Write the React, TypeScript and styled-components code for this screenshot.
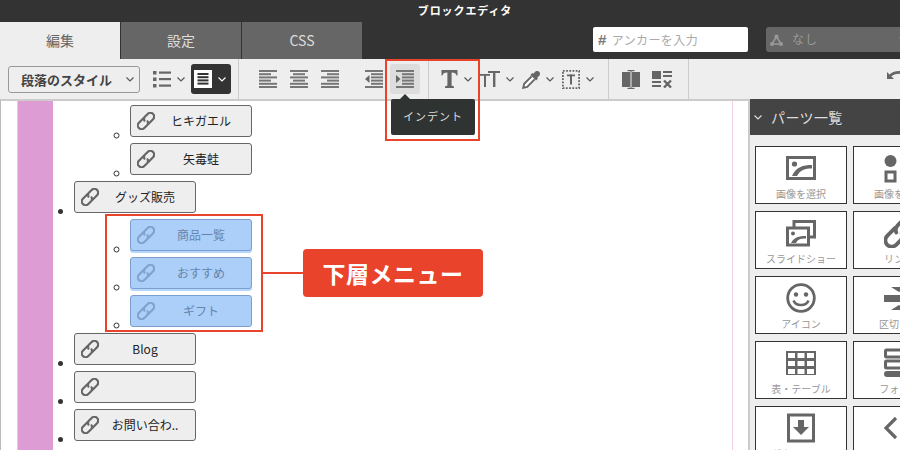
import React from 'react'
import styled, { createGlobalStyle } from 'styled-components'

const GlobalStyle = createGlobalStyle`
  html, body {
    margin: 0;
    padding: 0;
    background: #fff;
    font-family: "Noto Sans CJK JP", "Liberation Sans", sans-serif;
  }
`

const grey = '#666'

const Caret: React.FC<{ color?: string }> = ({ color = '#555' }) => (
  <svg width="8" height="5" viewBox="0 0 8 5">
    <polyline points="0.5,0.5 4,4 7.5,0.5" fill="none" stroke={color} strokeWidth="1.2" />
  </svg>
)

const Icon18: React.FC<{ w?: number, h?: number, children: React.ReactNode }> = ({ w = 18, h = 18, children }) => (
  <svg width={w} height={h} viewBox={`0 0 ${w} ${h}`}>{children}</svg>
)

// two open links along the diagonal, same drawing for the list buttons and the parts panel
const ChainIcon: React.FC<{ size: number, weight?: number }> = ({ size, weight = 2.2 }) => (
  <svg width={size} height={size} viewBox="0 0 18 18" fill="none" stroke="currentColor" strokeWidth={weight} strokeLinecap="round">
    <g transform="rotate(-45 9 9)">
      <path d="M9.5 5.2H2.8a3.8 3.8 0 0 0 0 7.6H6.5a3.8 3.8 0 0 0 3.4-2.4" />
      <path d="M8.5 12.8H15.2a3.8 3.8 0 0 0 0-7.6H11.5a3.8 3.8 0 0 0-3.4 2.4" />
    </g>
  </svg>
)

// rows are [x, width] for the text lines of the paragraph icons
const Lines: React.FC<{ rows: Array<[number, number]> }> = ({ rows }) => (
  <>
    {rows.map(([x, w], i) => (
      <rect key={i} x={x} y={i * 3.2} width={w} height="2" fill="#777" />
    ))}
  </>
)

const AlignIcon: React.FC<{ rows: Array<[number, number]> }> = ({ rows }) => (
  <Icon18><Lines rows={rows} /></Icon18>
)

const OutdentIcon = () => (
  <Icon18>
    <Lines rows={[[0, 18], [6, 12], [6, 12], [6, 12], [6, 12], [0, 18]]} />
    <polygon points="0,9 4.5,5 4.5,13" fill={grey} />
  </Icon18>
)

const IndentIcon = () => (
  <Icon18>
    <Lines rows={[[0, 18], [6, 12], [6, 12], [6, 12], [6, 12], [0, 18]]} />
    <polygon points="4.5,9 0,5 0,13" fill={grey} />
  </Icon18>
)

const ListIcon = () => (
  <Icon18>
    {[1, 7.5, 14].map((y) => (
      <g key={y}>
        <rect x="0" y={y} width="3.5" height="3.5" fill={grey} />
        <rect x="6" y={y + 0.5} width="12" height="2.2" fill={grey} />
      </g>
    ))}
  </Icon18>
)

const ParagraphIcon = () => (
  <Icon18>
    <rect width="18" height="18" fill="#fff" />
    {[3, 6.2, 9.4, 12.6].map((y) => (
      <rect key={y} x="3.5" y={y} width="11" height="2" fill="#333" />
    ))}
  </Icon18>
)

const SerifTIcon = () => (
  <Icon18 w={17} h={20}>
    <path d="M0.5 1H16.5V6.5H15.5C15 4.5 14 3.4 10.6 3.4V16.6L13 17.6V19H4V17.6L6.4 16.6V3.4C3 3.4 2 4.5 1.5 6.5H0.5Z" fill={grey} />
  </Icon18>
)

const SizeIcon = () => (
  <Icon18 w={20} h={18}>
    <rect x="0" y="4" width="10" height="1.8" fill={grey} />
    <rect x="4" y="4" width="2" height="13" fill={grey} />
    <rect x="8" y="1" width="12" height="2" fill={grey} />
    <rect x="13" y="1" width="2.4" height="16" fill={grey} />
  </Icon18>
)

const DropperIcon = () => (
  <Icon18 h={19}>
    <path d="M12.5 2.5C14 0.6 16.2 0.6 17.2 1.8C18.4 2.9 18.3 5 16.5 6.5L15.2 7.8L16 8.6L14 10.6L8.4 5L10.4 3L11.2 3.8Z" fill={grey} />
    <path d="M9.6 6.4L2.2 13.8L1.2 17.8L5.2 16.8L12.6 9.4" fill="#fff" stroke={grey} strokeWidth="1.9" />
  </Icon18>
)

const FrameTIcon = () => (
  <Icon18 h={19}>
    <rect x="0.9" y="0.9" width="16.2" height="17.2" fill="none" stroke={grey} strokeWidth="1.8" strokeDasharray="1.8 1.4" />
    <rect x="5" y="4.5" width="8" height="1.8" fill={grey} />
    <rect x="8" y="4.5" width="2" height="10" fill={grey} />
  </Icon18>
)

const ColumnsIcon = () => (
  <Icon18 h={21}>
    <rect x="0" y="3" width="8" height="15" fill={grey} />
    <rect x="10" y="3" width="8" height="15" fill={grey} />
    <rect x="5.5" y="1" width="7" height="1.2" fill={grey} />
    <rect x="5.5" y="18.8" width="7" height="1.2" fill={grey} />
    <rect x="8.5" y="1" width="1" height="19" fill={grey} />
  </Icon18>
)

const ClearIcon = () => (
  <Icon18 w={20} h={18}>
    <rect x="0" y="1" width="9" height="8" fill={grey} />
    <rect x="11" y="1" width="9" height="2" fill={grey} />
    <rect x="11" y="5" width="9" height="2" fill={grey} />
    <rect x="0" y="11" width="9" height="2" fill={grey} />
    <rect x="0" y="15" width="9" height="2" fill={grey} />
    <path d="M12 10.5L19 17.5M19 10.5L12 17.5" stroke={grey} strokeWidth="2.4" />
  </Icon18>
)

const UndoIcon = () => (
  <svg width="18" height="14" viewBox="0 0 18 14">
    <polygon points="0,3 0,10 7,10" fill={grey} />
    <path d="M3 7C6 3.5 11 2.5 18 4" fill="none" stroke={grey} strokeWidth="2.6" />
  </svg>
)

const HubIcon = () => (
  <svg width="13" height="12" viewBox="0 0 13 12">
    <path d="M6.5 2.5L2 10H11Z" fill="none" stroke="#999" strokeWidth="1.6" />
    <circle cx="6.5" cy="2.5" r="2" fill="#999" />
    <circle cx="2" cy="10" r="2" fill="#999" />
    <circle cx="11" cy="10" r="2" fill="#999" />
  </svg>
)

const PartSvg = styled.svg`
  width: 30px;
  height: 30px;
  display: block;
`

const ImagePart = () => (
  <PartSvg viewBox="0 0 30 30">
    <rect x="1.5" y="4.5" width="27" height="21" fill="none" stroke={grey} strokeWidth="3" />
    <circle cx="8.5" cy="11" r="2.6" fill={grey} />
    <path d="M6 23C10 14 17 12 26 12V15.5C19 15.5 14 17 11 23Z" fill={grey} />
  </PartSvg>
)

const ShapesPart = () => (
  <PartSvg viewBox="0 0 30 30">
    <circle cx="6.5" cy="8" r="6" fill={grey} />
    <polygon points="23,2 30,14 16,14" fill={grey} />
    <rect x="2" y="19" width="9" height="9" fill="none" stroke={grey} strokeWidth="3" />
    <path d="M16 28L23 17L30 28Z" fill={grey} />
  </PartSvg>
)

const SlidesPart = () => (
  <PartSvg viewBox="0 0 30 30">
    <path d="M8 9V3.5H28.5V19H23" fill="none" stroke={grey} strokeWidth="3" />
    <rect x="1.5" y="10" width="21" height="17" fill="none" stroke={grey} strokeWidth="3" />
    <circle cx="7" cy="15.5" r="2" fill={grey} />
    <path d="M5 25C8 19 13 18 20 18V20.5C15 20.5 12 21 10 25Z" fill={grey} />
  </PartSvg>
)

const LinkPart = () => <LinkWrap><ChainIcon size={30} weight={2.3} /></LinkWrap>

const SmilePart = () => (
  <PartSvg viewBox="0 0 30 30">
    <circle cx="15" cy="15" r="13.3" fill="none" stroke={grey} strokeWidth="2.8" />
    <circle cx="10" cy="11.5" r="2.2" fill={grey} />
    <circle cx="20" cy="11.5" r="2.2" fill={grey} />
    <path d="M7.5 17.5C9.5 23.5 20.5 23.5 22.5 17.5" fill="none" stroke={grey} strokeWidth="2.4" />
  </PartSvg>
)

const DividerPart = () => (
  <PartSvg viewBox="0 0 30 30">
    <polygon points="7,4 23,4 15,9" fill={grey} />
    <rect x="0" y="12" width="30" height="7" fill={grey} />
    <polygon points="7,27 23,27 15,22" fill={grey} />
  </PartSvg>
)

const TablePart = () => (
  <PartSvg viewBox="0 0 30 30">
    <rect x="0" y="3" width="30" height="24" fill={grey} />
    {[2, 11.5, 21].map((x) => [5, 13, 21].map((y) => (
      <rect key={`${x}-${y}`} x={x} y={y} width="7" height="5" fill="#fff" />
    )))}
  </PartSvg>
)

const FormPart = () => (
  <PartSvg viewBox="0 0 30 30">
    <rect x="1.5" y="2" width="27" height="7" rx="1" fill="none" stroke={grey} strokeWidth="3" />
    <rect x="1.5" y="13" width="27" height="7" rx="1" fill="none" stroke={grey} strokeWidth="3" />
    <rect x="0" y="23" width="30" height="6" rx="3" fill={grey} />
  </PartSvg>
)

const DownloadPart = () => (
  <PartSvg viewBox="0 0 30 30">
    <rect x="2.5" y="2" width="25" height="26" fill="none" stroke={grey} strokeWidth="3" />
    <rect x="12" y="7" width="6" height="8" fill={grey} />
    <polygon points="7,14 23,14 15,22" fill={grey} />
  </PartSvg>
)

const CodePart = () => (
  <PartSvg viewBox="0 0 30 30">
    <polyline points="12,5 2,15 12,25" fill="none" stroke={grey} strokeWidth="3.2" />
    <polyline points="18,5 28,15 18,25" fill="none" stroke={grey} strokeWidth="3.2" />
  </PartSvg>
)

const parts: Array<{ label: string, icon: React.ReactNode }> = [
  { label: '画像を選択', icon: <ImagePart /> },
  { label: '画像を挿入', icon: <ShapesPart /> },
  { label: 'スライドショー', icon: <SlidesPart /> },
  { label: 'リンク', icon: <LinkPart /> },
  { label: 'アイコン', icon: <SmilePart /> },
  { label: '区切り線', icon: <DividerPart /> },
  { label: '表・テーブル', icon: <TablePart /> },
  { label: 'フォーム', icon: <FormPart /> },
  { label: 'ダウンロード', icon: <DownloadPart /> },
  { label: 'ソースコード', icon: <CodePart /> },
]

interface MenuItem {
  label: string,
  selected?: boolean,
  trail?: boolean,
  children?: Array<MenuItem>
}

const menu: Array<MenuItem> = [
  { label: 'グッズ販売', children: [
    { label: '商品一覧', selected: true, trail: true },
    { label: 'おすすめ', selected: true, trail: true },
    { label: 'ギフト', selected: true },
  ] },
  { label: 'Blog' },
  { label: '' },
  { label: 'お問い合わ..' },
]

const LinkButton: React.FC<{ item: MenuItem }> = ({ item }) => (
  <MenuButton $selected={item.selected} $trail={item.trail}>
    <MenuRow>
      <LinkGlyph $selected={item.selected}><ChainIcon size={18} /></LinkGlyph>
      <MenuLabel>{item.label}</MenuLabel>
    </MenuRow>
  </MenuButton>
)

const App: React.FC = () => (
  <Page>
    <GlobalStyle />
    <Header>
      <Title>ブロックエディタ</Title>
      <HeaderRow>
        <Tab $active>編集</Tab>
        <Tab>設定</Tab>
        <Tab>CSS</Tab>
        <Anchor>
          <Hash>#</Hash>
          アンカーを入力
        </Anchor>
        <Dropdown>
          <HubIcon />
          <DropdownText>なし</DropdownText>
          <Caret color="#999" />
        </Dropdown>
      </HeaderRow>
    </Header>

    <Toolbar>
      <ToolGroup $width={239} $pad={8}>
        <StyleSelect>
          段落のスタイル
          <Caret />
        </StyleSelect>
        <ListButton>
          <ListIcon />
          <Caret />
        </ListButton>
        <DarkButton>
          <ParagraphIcon />
          <Caret color="#fff" />
        </DarkButton>
      </ToolGroup>
      <ToolGroup $width={190} $pad={14}>
        <IconButton><AlignIcon rows={[[0, 18], [0, 12], [0, 18], [0, 12], [0, 18], [0, 18]]} /></IconButton>
        <IconButton $gap={1}><AlignIcon rows={[[0, 18], [3, 12], [0, 18], [3, 12], [0, 18], [0, 18]]} /></IconButton>
        <IconButton $gap={1}><AlignIcon rows={[[0, 18], [6, 12], [0, 18], [6, 12], [0, 18], [0, 18]]} /></IconButton>
        <IconButton $gap={14}><OutdentIcon /></IconButton>
        <IconButton $gap={1} $active><IndentIcon /></IconButton>
      </ToolGroup>
      <ToolGroup $width={180} $pad={12}>
        <CaretButton><SerifTIcon /><Caret /></CaretButton>
        <CaretButton><SizeIcon /><Caret /></CaretButton>
        <CaretButton><DropperIcon /><Caret /></CaretButton>
        <CaretButton><FrameTIcon /><Caret /></CaretButton>
      </ToolGroup>
      <ToolGroup $width={80} $pad={13}>
        <ColumnsIcon />
        <PlainIcon><ClearIcon /></PlainIcon>
      </ToolGroup>
      <UndoWrap><UndoIcon /></UndoWrap>
    </Toolbar>

    <Main>
      <Editor>
        <PinkColumn />
        <Sheet>
          <TopList>
            <GhostItem>
              <SubList>
                <SubItem><LinkButton item={{ label: 'ヒキガエル' }} /></SubItem>
                <SubItem><LinkButton item={{ label: '矢毒蛙' }} /></SubItem>
              </SubList>
            </GhostItem>
            {menu.map((item) => (
              <TopItem key={item.label || 'empty'}>
                <LinkButton item={item} />
                {item.children ? (
                  <SubList>
                    {item.children.map((child) => (
                      <SubItem key={child.label}><LinkButton item={child} /></SubItem>
                    ))}
                  </SubList>
                ) : null}
              </TopItem>
            ))}
          </TopList>
        </Sheet>
      </Editor>
      <Sidebar>
        <SidebarHead>
          <Caret color="#ddd" />
          パーツ一覧
        </SidebarHead>
        <PartGrid>
          {parts.map((part) => (
            <PartCard key={part.label}>
              <PartIcon>{part.icon}</PartIcon>
              <PartLabel>{part.label}</PartLabel>
            </PartCard>
          ))}
        </PartGrid>
      </Sidebar>
    </Main>

    <ToolMark />
    <Tooltip>インデント</Tooltip>
    <MenuMark />
    <CalloutLine />
    <Callout>下層メニュー</Callout>
  </Page>
)

const Page = styled.div`
  position: relative;
  width: 900px;
  height: 450px;
  overflow: hidden;
  background: #fff;
`

const Header = styled.div`
  height: 59px;
  background: #333;
`

const Title = styled.div`
  height: 22px;
  padding-left: 30px;
  text-align: center;
  color: #fff;
  font-size: 11px;
  font-weight: 700;
  line-height: 21px;
  letter-spacing: 0.9px;
`

const HeaderRow = styled.div`
  display: flex;
  height: 37px;
  gap: 1px;
`

const Tab = styled.div<{ $active?: boolean }>`
  flex-shrink: 0;
  width: 120px;
  text-align: center;
  font-size: 14px;
  line-height: 37px;
  color: ${(props) => (props.$active ? '#666' : '#ddd')};
  background: ${(props) => (props.$active ? '#eee' : '#666')};
`

const Anchor = styled.div`
  display: flex;
  align-items: center;
  flex-shrink: 0;
  box-sizing: border-box;
  width: 155px;
  height: 25px;
  margin: 5px 0 0 230px;
  padding-left: 5px;
  background: #fff;
  border-radius: 2px;
  color: #aaa;
  font-size: 12px;
  letter-spacing: 0.4px;
`

const Hash = styled.span`
  margin-right: 5px;
  color: #777;
  font-family: "Liberation Sans", sans-serif;
  font-size: 15px;
  font-weight: 700;
`

const Dropdown = styled.div`
  display: flex;
  align-items: center;
  flex-shrink: 0;
  box-sizing: border-box;
  width: 141px;
  height: 25px;
  margin: 5px 0 0 17px;
  padding: 0 0 0 4px;
  background: #666;
  border-radius: 3px;
`

const DropdownText = styled.span`
  flex: 1;
  margin-left: 9px;
  padding-bottom: 3px;
  color: #999;
  font-size: 12px;
  letter-spacing: 1px;
`

const Toolbar = styled.div`
  display: flex;
  height: 40px;
  background: #eee;
`

const ToolGroup = styled.div<{ $width: number, $pad: number }>`
  display: flex;
  align-items: center;
  flex-shrink: 0;
  box-sizing: border-box;
  width: ${(props) => props.$width}px;
  padding-left: ${(props) => props.$pad}px;
  border-right: 1px solid #ccc;
`

const StyleSelect = styled.div`
  display: flex;
  align-items: center;
  justify-content: space-between;
  box-sizing: border-box;
  width: 132px;
  height: 27px;
  padding: 0 5px 0 12px;
  border: 1px solid #999;
  border-radius: 3px;
  color: #444;
  font-size: 13px;
  font-weight: 700;
`

const ListButton = styled.div`
  display: flex;
  align-items: center;
  gap: 6px;
  margin-left: 13px;
`

const DarkButton = styled.div`
  display: flex;
  align-items: center;
  gap: 6px;
  box-sizing: border-box;
  width: 40px;
  height: 30px;
  margin-left: 6px;
  padding-left: 3px;
  background: #333;
  border-radius: 3px;
`

const IconButton = styled.div<{ $gap?: number, $active?: boolean }>`
  display: flex;
  align-items: center;
  justify-content: center;
  width: 30px;
  height: 30px;
  margin-left: ${(props) => props.$gap || 0}px;
  border-radius: 3px;
  background: ${(props) => (props.$active ? '#ddd' : 'transparent')};
`

const CaretButton = styled.div`
  display: flex;
  align-items: center;
  gap: 6px;
  margin-right: 8px;
`

const PlainIcon = styled.div`
  display: flex;
  margin-left: 12px;
`

const UndoWrap = styled.div`
  display: flex;
  align-items: center;
  flex-shrink: 0;
  margin: -6px 0 0 198px;
`

const Main = styled.div`
  display: flex;
  height: 351px;
`

const Editor = styled.div`
  display: flex;
  flex-shrink: 0;
  box-sizing: border-box;
  width: 750px;
  padding-left: 16px;
  border-top: 2px solid #ccc;
  border-left: 1px solid #bbb;
  border-right: 2px solid #ccc;
`

const PinkColumn = styled.div`
  flex-shrink: 0;
  width: 36px;
  background: #dd9dd4;
  border-left: 1px solid #ecc8e6;
  box-sizing: border-box;
`

const Sheet = styled.div`
  width: 680px;
  height: 349px;
  overflow: hidden;
  box-sizing: border-box;
  border-right: 1px solid #f2cdec;
`

const TopList = styled.ul`
  margin: 0;
  padding: 1px 0 0 21px;
  list-style: disc;
  font-size: 12px;
  line-height: 0;
  color: #333;
`

const GhostItem = styled.li`
  list-style: none;
`

const TopItem = styled.li``

const SubList = styled.ul`
  margin: 0;
  padding: 0 0 0 56px;
  list-style: circle;
`

const SubItem = styled.li``

const MenuButton = styled.div<{ $selected?: boolean, $trail?: boolean }>`
  display: inline-block;
  overflow: hidden;
  box-sizing: border-box;
  width: 122px;
  height: 32px;
  margin: 3px 0;
  border: 1px solid ${(props) => (props.$selected ? '#7c9fcf' : '#666')};
  border-radius: 3px;
  background: ${(props) => (props.$selected ? '#abcff8' : '#eee')};
  box-shadow: ${(props) => (props.$trail ? '0 2px 0 #b5d6fd' : 'none')};
  color: ${(props) => (props.$selected ? '#6585ad' : '#222')};
`

const MenuRow = styled.div`
  display: flex;
  align-items: center;
  height: 100%;
  padding: 0 4px 0 6px;
`

const LinkGlyph = styled.span<{ $selected?: boolean }>`
  display: flex;
  flex-shrink: 0;
  color: ${(props) => (props.$selected ? '#81a2cc' : '#666')};
`

const LinkWrap = styled.span`
  display: flex;
  color: ${grey};
`

const MenuLabel = styled.span`
  flex: 1;
  text-align: center;
  font-size: 12px;
  line-height: 16px;
  white-space: nowrap;
`

const Sidebar = styled.div`
  flex-shrink: 0;
  width: 150px;
  background: #eee;
  overflow: hidden;
`

const SidebarHead = styled.div`
  display: flex;
  align-items: center;
  gap: 9px;
  height: 36px;
  padding-left: 4px;
  background: #444;
  color: #ddd;
  font-size: 14px;
  letter-spacing: 0.4px;
`

const PartGrid = styled.div`
  display: grid;
  grid-template-columns: repeat(2, 92px);
  grid-auto-rows: 58px;
  gap: 7px 6px;
  padding: 11px 0 0 5px;
`

const PartCard = styled.div`
  display: flex;
  flex-direction: column;
  align-items: center;
  box-sizing: border-box;
  padding-top: 6px;
  background: #fff;
  border: 1px solid #333;
`

const PartIcon = styled.div`
  display: flex;
  height: 30px;
`

const PartLabel = styled.div`
  margin-top: 4px;
  color: #999;
  font-size: 10px;
  line-height: 14px;
  white-space: nowrap;
`

const ToolMark = styled.div`
  position: absolute;
  left: 385px;
  top: 59px;
  box-sizing: border-box;
  width: 95px;
  height: 82px;
  border: 2px solid #ea432c;
`

const Tooltip = styled.div`
  position: absolute;
  left: 391px;
  top: 99px;
  box-sizing: border-box;
  width: 84px;
  height: 36px;
  background: #2f3331;
  border-radius: 2px;
  color: #ddd;
  font-size: 11px;
  line-height: 35px;
  text-align: center;
  letter-spacing: 1px;
  &::before {
    content: '';
    position: absolute;
    left: 9px;
    top: -5px;
    border-left: 5px solid transparent;
    border-right: 5px solid transparent;
    border-bottom: 5px solid #2f3331;
  }
`

const MenuMark = styled.div`
  position: absolute;
  left: 105px;
  top: 214px;
  box-sizing: border-box;
  width: 158px;
  height: 118px;
  border: 2px solid #ea432c;
`

const CalloutLine = styled.div`
  position: absolute;
  left: 263px;
  top: 272px;
  width: 40px;
  height: 2px;
  background: #ea432c;
`

const Callout = styled.div`
  position: absolute;
  left: 303px;
  top: 249px;
  width: 180px;
  height: 48px;
  background: #ea432c;
  border-radius: 4px;
  color: #fff;
  font-size: 23px;
  font-weight: 700;
  line-height: 48px;
  text-align: center;
  letter-spacing: 0.5px;
`

export default App
